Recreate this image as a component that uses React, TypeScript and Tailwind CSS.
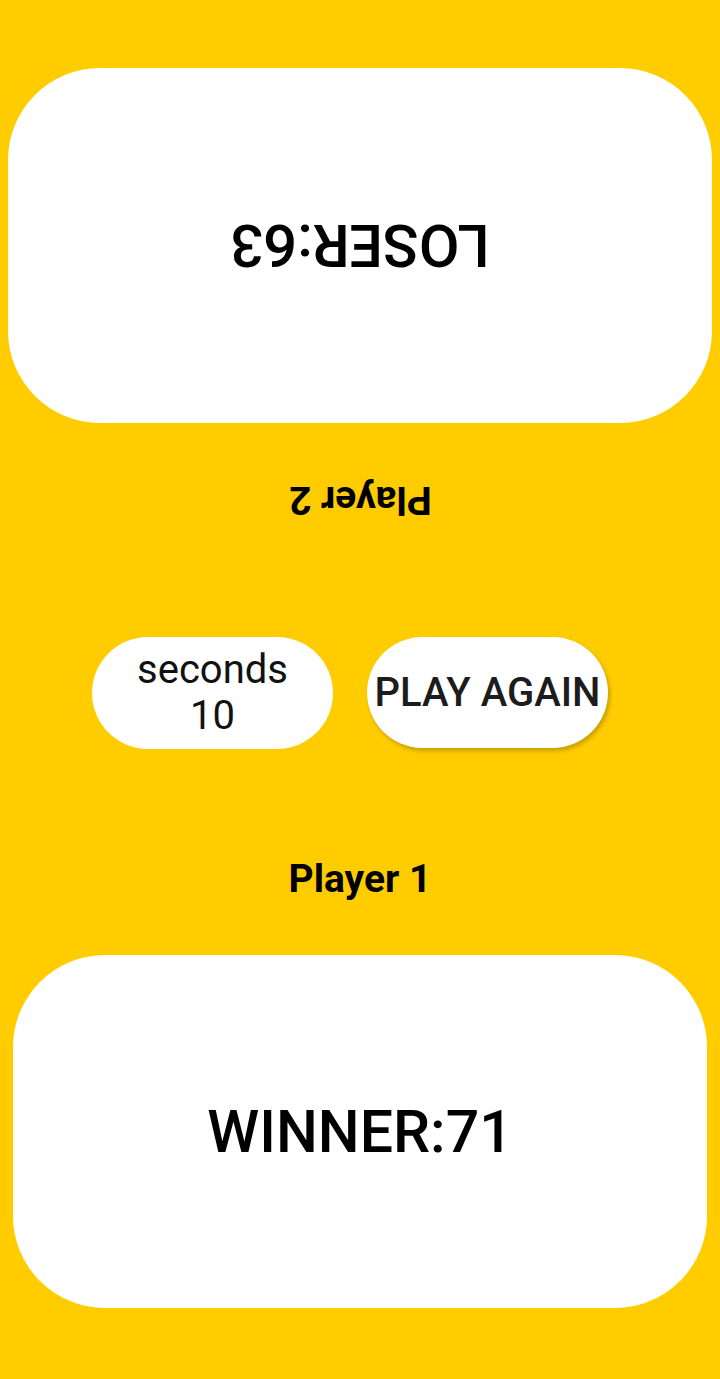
import React from "react";

function ScoreCard({
  label,
  flipped,
  className,
}: {
  label: React.ReactNode;
  flipped?: boolean;
  className: string;
}) {
  return (
    <div
      className={`flex items-center justify-center rounded-[92px] bg-white ${className}`}
    >
      <div className={flipped ? "rotate-180" : ""}>{label}</div>
    </div>
  );
}

export default function App() {
  return (
    <div className="flex min-h-[1379px] w-full flex-col bg-[#ffcc00] font-['Roboto',sans-serif] text-black">
      {/* Player 2 sits across the table, so their side is upside down */}
      <ScoreCard
        flipped
        className="mx-[8px] mt-[68px] h-[355px]"
        label={
          <span className="block text-[59px] leading-none font-medium">LOSER:63</span>
        }
      />

      <div className="mt-[56px] flex h-[42px] items-center justify-center">
        <span className="rotate-180 text-[39px] leading-[42px] font-bold">Player 2</span>
      </div>

      <div className="mt-[116px] flex h-[112px] items-start justify-center gap-[34px] pr-[20px]">
        <div className="flex h-[112px] w-[241px] flex-col items-center justify-center rounded-full bg-white text-[40px] leading-[46px] font-normal text-[#111]">
          <span>seconds</span>
          <span>10</span>
        </div>
        <button className="flex h-[111px] w-[241px] items-center justify-center rounded-full bg-white text-[40px] leading-none font-medium text-[#1c1c1c] shadow-[2px_3px_4px_rgba(0,0,0,0.22)]">
          PLAY AGAIN
        </button>
      </div>

      <div className="mt-[109px] flex h-[42px] items-center justify-center">
        <span className="text-[39px] leading-[42px] font-bold">Player 1</span>
      </div>

      <ScoreCard
        className="mx-[13px] mt-[55px] h-[353px]"
        label={
          <span className="block text-[59px] leading-none font-medium">WINNER:71</span>
        }
      />
    </div>
  );
}
